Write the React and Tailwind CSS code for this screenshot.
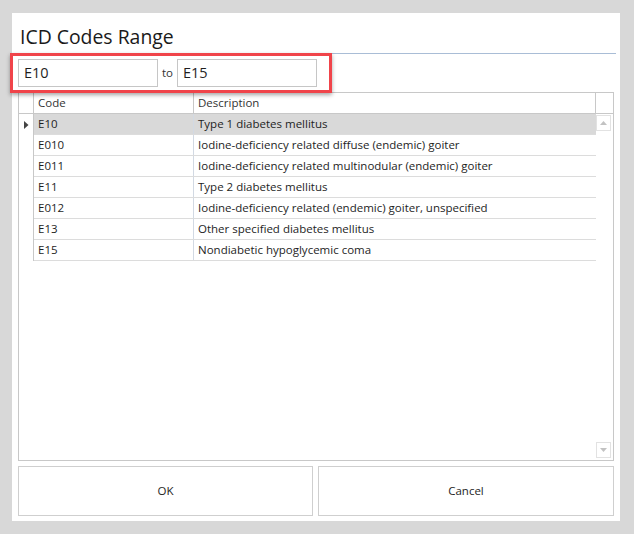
import React from 'react';

const rows = [
  ['E10', 'Type 1 diabetes mellitus'],
  ['E010', 'Iodine-deficiency related diffuse (endemic) goiter'],
  ['E011', 'Iodine-deficiency related multinodular (endemic) goiter'],
  ['E11', 'Type 2 diabetes mellitus'],
  ['E012', 'Iodine-deficiency related (endemic) goiter, unspecified'],
  ['E13', 'Other specified diabetes mellitus'],
  ['E15', 'Nondiabetic hypoglycemic coma'],
];

const font = { fontFamily: '"Open Sans", "Noto Sans", sans-serif' };

export default function App() {
  return (
    <div
      className="w-[634px] h-[534px] bg-[#d8d8d8] pt-[13px] pl-[12px] text-[#1e1e1e]"
      style={font}
    >
      <div className="w-[608px] h-[508px] bg-white flex flex-col">
        <div className="h-[40px] pl-[8px] pt-[11px] text-[19.4px] leading-[26px] text-[#1a1a1a]">
          ICD Codes Range
        </div>
        <div className="h-px bg-[#a9bdd6] ml-[8px] mr-[4px]" />

        <div className="relative">
          {/* annotation highlight */}
          <div className="absolute left-[-2px] top-[-1px] w-[322px] h-[40px] border-[3px] border-[#f0444a] shadow-[0_2px_4px_rgba(0,0,0,0.35)] pointer-events-none" />
          <div className="flex items-center pl-[6px] pt-[5px] h-[33px]">
            <div className="w-[140px] h-[28px] border border-[#c6c6c6] pl-[5px] text-[14.5px] leading-[26px]">
              E10
            </div>
            <span className="w-[19px] text-center text-[11.5px] text-[#333]">to</span>
            <div className="w-[140px] h-[28px] border border-[#c6c6c6] pl-[5px] text-[14.5px] leading-[26px]">
              E15
            </div>
          </div>
        </div>

        {/* grid */}
        <div className="ml-[6px] mt-[5px] w-[596px] h-[369px] border border-[#c8c8c8] flex text-[11.5px]">
          <div className="flex-1 flex flex-col">
            <div className="flex h-[21px] border-b border-[#c8c8c8] text-[#333] leading-[20px]">
              <div className="w-[15px] border-r border-[#c8c8c8]" />
              <div className="w-[160px] pl-[4px] border-r border-[#c8c8c8]">Code</div>
              <div className="flex-1 pl-[4px] border-r border-[#c8c8c8]">Description</div>
            </div>
            {rows.map(([code, desc], i) => (
              <div key={code} className="flex h-[21px] leading-[20px]">
                <div className="w-[15px] border-r border-[#c8c8c8] flex items-center justify-center">
                  {i === 0 && (
                    <svg width="5" height="8" viewBox="0 0 5 8">
                      <path d="M0 0 L4.5 4 L0 8 Z" fill="#444" />
                    </svg>
                  )}
                </div>
                <div
                  className={
                    'flex flex-1 border-b border-[#dcdcdc] ' + (i === 0 ? 'bg-[#d9d9d9]' : '')
                  }
                >
                  <div className="w-[160px] pl-[4px] border-r border-[#d2d9e3]">{code}</div>
                  <div className="flex-1 pl-[4px]">{desc}</div>
                </div>
              </div>
            ))}
          </div>
          <div className="w-[17px] flex flex-col">
            <div className="h-[21px] border-b border-[#c8c8c8]" />
            <div className="flex-1 flex flex-col justify-between pt-[1px] pb-[2px] pr-[2px]">
              <div className="w-[15px] h-[16px] border border-[#e2e2e2] flex items-center justify-center">
                <svg width="7" height="4" viewBox="0 0 7 4">
                  <path d="M0 4 L3.5 0 L7 4 Z" fill="#c2c2c2" />
                </svg>
              </div>
              <div className="w-[15px] h-[16px] border border-[#e2e2e2] flex items-center justify-center">
                <svg width="7" height="4" viewBox="0 0 7 4">
                  <path d="M0 0 L3.5 4 L7 0 Z" fill="#c2c2c2" />
                </svg>
              </div>
            </div>
          </div>
        </div>

        {/* buttons */}
        <div className="flex gap-[5px] ml-[6px] mt-[5px]">
          <button className="w-[295px] h-[50px] border border-[#cfcfcf] bg-white text-[11.5px] text-[#1e1e1e]">
            OK
          </button>
          <button className="w-[296px] h-[50px] border border-[#cfcfcf] bg-white text-[11.5px] text-[#1e1e1e]">
            Cancel
          </button>
        </div>
      </div>
    </div>
  );
}
